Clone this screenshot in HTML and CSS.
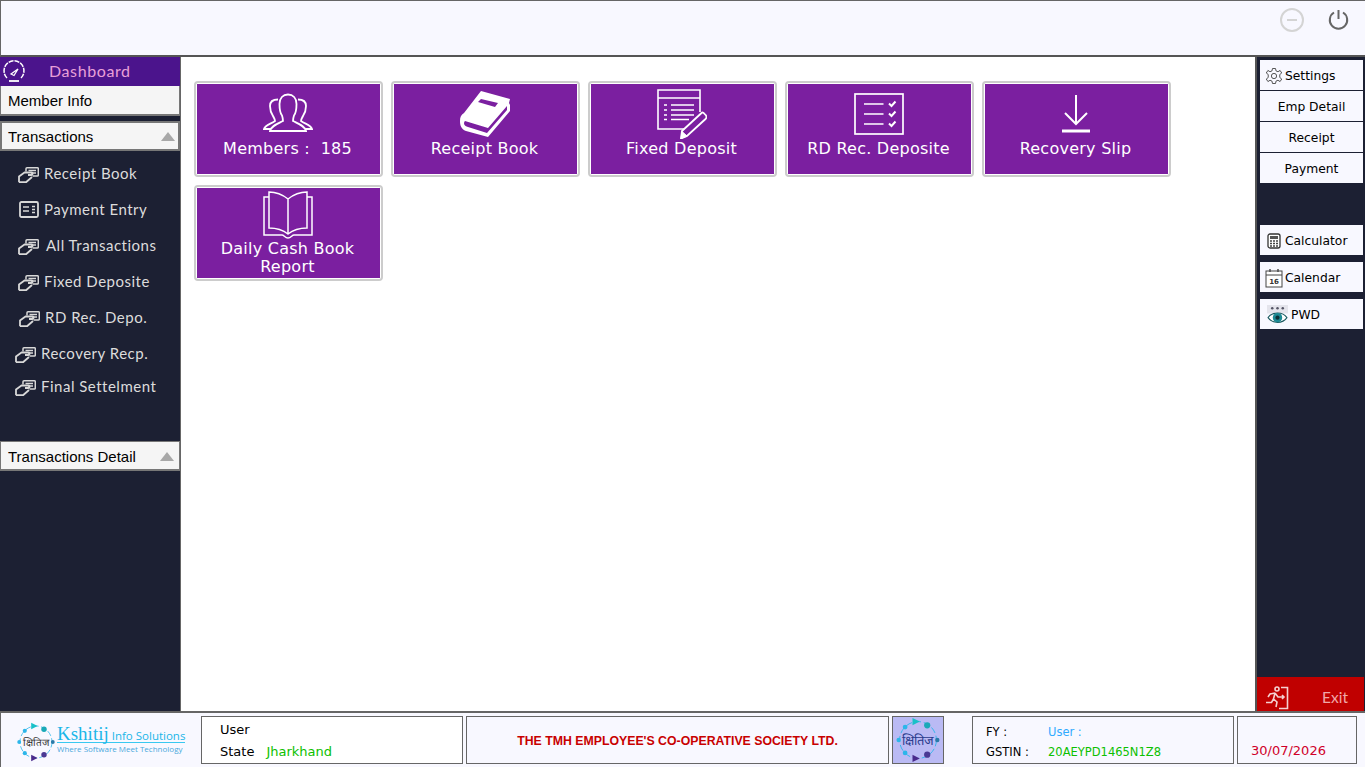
FILE: index.html
```html
<!DOCTYPE html>
<html lang="en">
<head>
    <meta charset="UTF-8">
    <meta name="viewport" content="width=device-width, initial-scale=1.0">
    <title>Dashboard - Kshitij Info Solutions</title>
    <link rel="stylesheet" href="styles.css">
</head>
<body>
    <svg class="defs" width="0" height="0" aria-hidden="true">
        <symbol id="card-icon" viewBox="0 0 21 16">
            <path d="M8 4.500V1.800C8 1.200 8.500 0.800 9 0.800H19.500C20 0.800 20.300 1.200 20.300 1.800V8C20.300 8.600 20 9 19.500 9H14.500" fill="none" stroke="#d8d8d8" stroke-width="1.500"/>
            <path d="M10.500 3.500H18M13 6H18" fill="none" stroke="#d8d8d8" stroke-width="1.300"/>
            <path d="M1 15.200V9.500L6.500 5.500H13.500C15 5.500 15 8 13.500 8H10M1 15.200H8L14 10" fill="none" stroke="#d8d8d8" stroke-width="1.800" stroke-linejoin="round"/>
        </symbol>
        <symbol id="ring-logo" viewBox="0 0 50 50">
            <g fill="none" stroke-width="1" stroke-dasharray="7 3">
                <circle cx="25" cy="25" r="20" stroke="#2cb6ea"/>
            </g>
            <path d="M19 1V9L27 5Z" fill="#19c0c8"/>
            <path d="M19 49V41L27 45Z" fill="#4a2a8c"/>
            <circle cx="35" cy="9" r="3.400" fill="#1aa9b8"/>
            <circle cx="35" cy="41" r="3.400" fill="#4a3a94"/>
            <circle cx="46" cy="25" r="2.400" fill="#2a7aa8"/>
            <circle cx="4" cy="25" r="2.400" fill="#2cb6ea"/>
            <circle cx="11" cy="11" r="2.600" fill="#2cb6ea"/>
            <circle cx="11" cy="39" r="2.600" fill="#2cb6ea"/>
        </symbol>
    </svg>

    <div class="app">
        <header class="top-bar">
            <svg class="top-icon" width="24" height="24" viewBox="0 0 24 24"><circle cx="12" cy="12" r="11" fill="none" stroke="#d4d4d4" stroke-width="2"/><path d="M7 12H17" stroke="#d4d4d4" stroke-width="2"/></svg>
            <svg class="top-icon" width="24" height="24" viewBox="0 0 24 24"><path d="M8 4.500A8.700 8.700 0 1 0 17 4.500" fill="none" stroke="#666" stroke-width="2"/><path d="M12.500 2V11" stroke="#666" stroke-width="2"/></svg>
        </header>

        <div class="middle">
            <aside class="sidebar">
                <div class="dash-head">
                    <svg width="24" height="24" viewBox="0 0 24 24"><path d="M5 18A10 10 0 1 1 19 18" fill="none" stroke="#fff" stroke-width="1.500" stroke-dasharray="5 1"/><path d="M9 14L16 9L12 15.500Z" fill="none" stroke="#fff" stroke-width="1.300"/><path d="M7 21H17" stroke="#fff" stroke-width="1.800"/></svg>
                    <span>Dashboard</span>
                </div>
                <div class="menu-head">Member Info</div>
                <div class="menu-head menu-head-open">Transactions<i class="caret"></i></div>
                <ul class="menu-list">
                    <li class="menu-item indent-18"><svg width="21" height="16"><use href="#card-icon"/></svg>Receipt Book</li>
                    <li class="menu-item menu-item-plain indent-19">
                        <svg width="20" height="17" viewBox="0 0 20 17"><rect x="1" y="1" width="18" height="15" rx="1.500" fill="none" stroke="#d8d8d8" stroke-width="1.800"/><path d="M4 6H10M4 10H10M13 5.500H16M13 8.500H16M13 11.500H16" stroke="#d8d8d8" stroke-width="1.500"/></svg>Payment Entry
                    </li>
                    <li class="menu-item indent-18 gap-wide"><svg width="21" height="16"><use href="#card-icon"/></svg>All Transactions</li>
                    <li class="menu-item indent-18"><svg width="21" height="16"><use href="#card-icon"/></svg>Fixed Deposite</li>
                    <li class="menu-item indent-19"><svg width="21" height="16"><use href="#card-icon"/></svg>RD Rec. Depo.</li>
                    <li class="menu-item indent-15"><svg width="21" height="16"><use href="#card-icon"/></svg>Recovery Recp.</li>
                    <li class="menu-item indent-15 menu-item-last"><svg width="21" height="16"><use href="#card-icon"/></svg>Final Settelment</li>
                </ul>
                <div class="menu-head menu-head-detail">Transactions Detail<i class="caret"></i></div>
            </aside>

            <main class="content">
                <div class="tiles">
                    <a class="tile"><div class="tile-inner">
                        <svg width="50" height="50" viewBox="0 0 50 50" fill="none" stroke="#fff" stroke-width="1.800"><path d="M8 40H1C2 36 8 35 12 32C12 30 11 29 10 27C8 24 7 20 7 17C7 13 10 10.500 15 10.500"/><path d="M42 40H49C48 36 42 35 38 32C38 30 39 29 40 27C42 24 43 20 43 17C43 13 40 10.500 35 10.500"/><path d="M7 42C8 37 14 35 20 32C20 30 19.500 28 19 26.500C17 24 16.500 20 16.500 15C16.500 9 20 5.500 25 5.500C30 5.500 33.500 9 33.500 15C33.500 20 33 24 31 26.500C30.500 28 30 30 30 32C36 35 42 37 43 42Z" fill="#7b1fa0"/></svg>
                        <span>Members :&nbsp; 185</span>
                    </div></a>
                    <a class="tile"><div class="tile-inner">
                        <svg width="50" height="50" viewBox="0 0 50 50"><path d="M21 2L50 10L49 14L50 16V22L28 48L6 42C1 40 0 36 0 32C0 28 1 26 4 24Z" fill="#fff"/><path d="M5 32C3 34 4 37 8 38L27 44L47 21V17L28 39Z" fill="#7b1fa0"/><path d="M21 10L38 14L35 18L18 13Z" fill="#7b1fa0"/></svg>
                        <span>Receipt Book</span>
                    </div></a>
                    <a class="tile"><div class="tile-inner">
                        <svg width="50" height="50" viewBox="0 0 50 50" fill="none" stroke="#fff"><path d="M27 40H1V1H43V23M1 9H43" stroke-width="1.600"/><path d="M7 16H10M14 16H37M7 21H10M14 21H37M7 26H10M14 26H37M7 30.500H10M14 30.500H32" stroke-width="1.600"/><path d="M25 42L44.500 24C46 22.500 47.500 25 49 26.500C50 28 49.500 29 48.500 30L30 47L24 49.500Z" stroke-width="1.800"/><path d="M25 42.500L30 47L24 49.500Z" fill="#fff"/></svg>
                        <span>Fixed Deposit</span>
                    </div></a>
                    <a class="tile"><div class="tile-inner">
                        <svg width="50" height="50" viewBox="0 0 50 50" fill="none" stroke="#fff"><rect x="1" y="5" width="48" height="40" stroke-width="1.700"/><path d="M10 15H29.500M10 25H29.500M10 35H29.500" stroke-width="1.600"/><path d="M35 14.500L37.500 17L41.500 12.500M35 24.500L37.500 27L41.500 22.500M35 34.500L37.500 37L41.500 32.500" stroke-width="2"/></svg>
                        <span>RD Rec. Deposite</span>
                    </div></a>
                    <a class="tile"><div class="tile-inner">
                        <svg width="50" height="50" viewBox="0 0 50 50" fill="none" stroke="#fff" stroke-width="2"><path d="M25 6V34.500M14 24L25 35L36 24"/><path d="M11 42H39" stroke-width="3"/></svg>
                        <span>Recovery Slip</span>
                    </div></a>
                    <a class="tile"><div class="tile-inner tile-inner-tall">
                        <svg width="50" height="48" viewBox="0 0 50 48" fill="none" stroke="#fff" stroke-width="1.500"><path d="M25 8C20 4 12 1 6 1V37C12 37 20 39 25 43C30 39 38 37 44 37V1C38 1 30 4 25 8ZM25 8V43"/><path d="M6 6H1V44H19C21 44 22 47 25 47C28 47 29 44 31 44H49V6H44"/></svg>
                        <span>Daily Cash Book Report</span>
                    </div></a>
                </div>
            </main>

            <aside class="right-panel">
                <div class="btn-stack">
                    <div class="side-btn side-btn-left">
                        <svg width="18" height="18" viewBox="0 0 24 24" fill="none" stroke="#444" stroke-width="1.200"><circle cx="12" cy="12" r="3.500"/><path d="M10 2H14L14.700 5.200L17.300 6.300L20.100 4.600L22.300 8L19.700 10L19.700 14L22.300 16L20.100 19.400L17.300 17.700L14.700 18.800L14 22H10L9.300 18.800L6.700 17.700L3.900 19.400L1.700 16L4.300 14L4.300 10L1.700 8L3.900 4.600L6.700 6.300L9.300 5.200Z"/></svg>
                        Settings
                    </div>
                    <div class="side-btn">Emp Detail</div>
                    <div class="side-btn">Receipt</div>
                    <div class="side-btn">Payment</div>
                </div>
                <div class="tool-list">
                    <div class="side-btn side-btn-left tool-calc">
                        <svg width="14" height="16" viewBox="0 0 14 16"><rect x="1" y="1" width="12" height="14" rx="2" fill="#fff" stroke="#333" stroke-width="1.300"/><rect x="3" y="3" width="8" height="3" fill="#555"/><path d="M3 8H5M6 8H8M9 8H11M3 10.500H5M6 10.500H8M9 10.500H11M3 13H5M6 13H8M9 13H11" stroke="#444" stroke-width="1.500"/></svg>
                        Calculator
                    </div>
                    <div class="side-btn side-btn-left tool-cal">
                        <svg width="18" height="20" viewBox="0 0 18 20"><rect x="1" y="3" width="16" height="16" fill="#fff" stroke="#444"/><path d="M1 7H17" stroke="#444"/><path d="M5 1V4M13 1V4" stroke="#444" stroke-width="1.400"/><text x="9" y="16" text-anchor="middle" class="cal-day">16</text></svg>
                        Calendar
                    </div>
                    <div class="side-btn side-btn-left tool-pwd">
                        <svg width="21" height="20" viewBox="0 0 20 19"><rect x="0" y="0" width="20" height="8" fill="#e4e4ec"/><circle cx="5" cy="3" r="1.200" fill="#556"/><circle cx="10" cy="3" r="1.200" fill="#556"/><circle cx="15" cy="3" r="1.200" fill="#556"/><path d="M1 12C5 6 15 6 19 12C15 18 5 18 1 12Z" fill="#fff" stroke="#1a5a60"/><circle cx="10" cy="12" r="4.500" fill="#1c8a94"/><circle cx="10" cy="12" r="2" fill="#0c3038"/></svg>
                        PWD
                    </div>
                </div>
                <div class="exit-btn">
                    <svg width="24" height="24" viewBox="0 0 24 24" fill="none" stroke="#f4d0d0" stroke-width="1.600"><path d="M16 1.500H22.500V22.500H14"/><circle cx="12" cy="3" r="2"/><path d="M10 7L5 8L3 11M10 7L8.500 13L12 16L11 21M8.500 13L6.500 16.500H1M10 7L13 11H19M17 9L19 11L17 13"/></svg>
                    <span>Exit</span>
                </div>
            </aside>
        </div>

        <footer class="footer">
            <div class="brand">
                <div class="ring-wrap">
                    <svg width="40" height="40"><use href="#ring-logo"/></svg>
                    <span class="ring-text">क्षितिज</span>
                </div>
                <div class="brand-text">
                    <div class="brand-name"><b>Kshitij</b> Info Solutions</div>
                    <div class="brand-tag">Where Software Meet Technology</div>
                </div>
            </div>
            <div class="info-box info-user">
                <div class="info-row">User</div>
                <div class="info-row">State <span class="green state-value">Jharkhand</span></div>
            </div>
            <div class="info-box company">THE TMH EMPLOYEE'S CO-OPERATIVE SOCIETY LTD.</div>
            <div class="info-box ring-box">
                <div class="ring-wrap">
                    <svg width="50" height="46"><use href="#ring-logo"/></svg>
                    <span class="ring-text ring-text-big">क्षितिज</span>
                </div>
            </div>
            <div class="info-box info-fy">
                <div class="info-row"><span class="fy-label">FY :</span><span class="blue">User :</span></div>
                <div class="info-row"><span class="fy-label">GSTIN :</span><span class="green">20AEYPD1465N1Z8</span></div>
            </div>
            <div class="info-box date-box">30/07/2026</div>
        </footer>
    </div>
</body>
</html>
```

FILE: styles.css
```css
* { box-sizing: border-box; }
body { margin: 0; font-family: "DejaVu Sans", Verdana, sans-serif; background: #fff; }
.defs { position: absolute; }
.app { display: flex; flex-direction: column; height: 100vh; overflow: hidden; }

.top-bar { height: 57px; flex: none; background: #f8f8ff; border-top: 1px solid #666; border-left: 1px solid #666; border-bottom: 2px solid #555; display: flex; justify-content: flex-end; align-items: flex-start; gap: 22px; padding: 7px 15px 0 0; }

.middle { flex: 1; display: flex; min-height: 0; }

.sidebar { width: 181px; flex: none; background: #1c2033; border-right: 1px solid #666; }
.dash-head { height: 29px; background: #4b148c; display: flex; align-items: center; padding-left: 2px; color: #e8a0d8; font-family: "Lato", sans-serif; font-size: 16px; letter-spacing: 0.6px; }
.dash-head span { margin: 0 0 2px 23px; }
.menu-head { height: 30px; background: #f5f5f5; border: 1px solid #777; border-width: 0 1px 2px 1px; color: #000; font-family: "Liberation Sans", Arial, sans-serif; font-size: 15px; display: flex; align-items: center; justify-content: space-between; padding: 1px 5px 0 7px; }
.menu-head-open { margin-top: 5px; border: 2px solid #777; padding: 0 3px 0 6px; }
.menu-head-detail { margin-top: 37px; border-width: 1px 1px 2px 1px; }
.caret { width: 0; height: 0; border-left: 7px solid transparent; border-right: 7px solid transparent; border-bottom: 9px solid #a8a8a8; }

.menu-list { list-style: none; margin: 0; padding: 4px 0 0; }
.menu-item { height: 36px; display: flex; align-items: center; gap: 5px; color: #dcdcdc; font-family: "Lato", sans-serif; font-size: 15px; letter-spacing: 0.5px; }
.menu-item svg { margin-top: 4px; }
.menu-item-plain svg { margin-top: 0; }
.gap-wide { gap: 7px; }
.indent-18 { padding-left: 18px; }
.indent-19 { padding-left: 19px; }
.indent-15 { padding-left: 15px; }
.menu-item-last { margin-top: -3px; }

.content { flex: 1; background: #fff; padding: 24px 0 0 13px; }
.tiles { display: flex; flex-wrap: wrap; gap: 8px; width: 990px; }
.tile { width: 189px; height: 96px; border: 2px solid #ccc; border-radius: 4px; padding: 1px; background: #fff; display: block; }
.tile-inner { height: 100%; background: #7b1fa0; color: #fff; text-align: center; font-size: 16px; letter-spacing: 0.25px; line-height: 18px; padding: 5px 2px 0 0; }
.tile-inner-tall { padding-top: 3px; }
.tile-inner svg { display: block; margin: 0 auto; }
.tile-inner span { display: block; margin-top: 1px; }

.right-panel { width: 110px; flex: none; background: #1c2033; border-left: 2px solid #555; display: flex; flex-direction: column; padding-top: 3px; }
.btn-stack { display: flex; flex-direction: column; gap: 1px; margin: 0 2px 0 3px; }
.side-btn { height: 30px; padding-top: 1px; background: #f8f8ff; color: #000; font-size: 12.300px; display: flex; align-items: center; justify-content: center; }
.side-btn-left { justify-content: flex-start; padding-left: 5px; gap: 2px; }
.tool-list { display: flex; flex-direction: column; gap: 7px; margin: 42px 2px 0 3px; }
.tool-calc { padding-left: 7px; gap: 4px; }
.tool-cal { padding-left: 5px; gap: 2px; }
.tool-pwd { padding-left: 7px; gap: 3px; }
.cal-day { font-size: 7px; font-weight: bold; fill: #333; }
.exit-btn { margin-top: auto; margin-right: 1px; height: 34px; background: #c00000; color: #f0a8a8; font-family: "Lato", sans-serif; font-size: 15.500px; display: flex; align-items: flex-end; justify-content: space-between; padding: 0 16px 1px 8px; }
.exit-btn span { margin-bottom: 4px; }

.footer { height: 56px; flex: none; background: #f8f8ff; border-top: 2px solid #666; border-left: 1px solid #666; display: flex; gap: 3px; padding-top: 3px; }
.brand { width: 200px; flex: none; display: flex; align-items: flex-start; padding: 6px 0 0 15px; gap: 1px; margin-right: -3px; }
.brand-text { width: 128px; color: #1ab6e8; }
.brand-name { font-family: "Open Sans", sans-serif; font-size: 11.500px; line-height: 24px; border-bottom: 1px solid #38c8f0; white-space: nowrap; height: 21px; }
.brand-name b { font-family: "Liberation Serif", serif; font-weight: normal; font-size: 19px; }
.brand-tag { font-family: "Open Sans", sans-serif; font-size: 8px; color: #4aa8dc; line-height: 12px; white-space: nowrap; }
.ring-wrap { position: relative; display: flex; align-items: center; justify-content: center; }
.ring-text { position: absolute; font-size: 10px; color: #333; white-space: nowrap; }
.ring-text-big { font-size: 13px; color: #2a3a8c; }
.ring-box svg { display: block; }

.info-box { height: 48px; flex: none; border: 1px solid #666; font-size: 13px; color: #000; }
.info-row { height: 22px; display: flex; align-items: center; }
.info-user { width: 262px; background: #fff; padding: 1px 0 0 18px; }
.state-value { margin-left: 12px; }
.company { width: 423px; display: flex; align-items: center; justify-content: center; padding-top: 1px; color: #c80000; font-family: "Liberation Sans", Arial, sans-serif; font-weight: bold; font-size: 12.300px; }
.ring-box { width: 52px; background: #babaf4; display: flex; align-items: center; justify-content: center; }
.info-fy { width: 262px; margin-left: 25px; font-size: 11.500px; padding: 5px 0 0 13px; }
.info-fy .info-row { height: 20px; }
.fy-label { width: 62px; flex: none; }
.date-box { width: 120px; color: #d0002a; font-size: 13px; padding: 26px 0 0 13px; }
.green { color: #0cc000; }
.blue { color: #30aaff; }
```
